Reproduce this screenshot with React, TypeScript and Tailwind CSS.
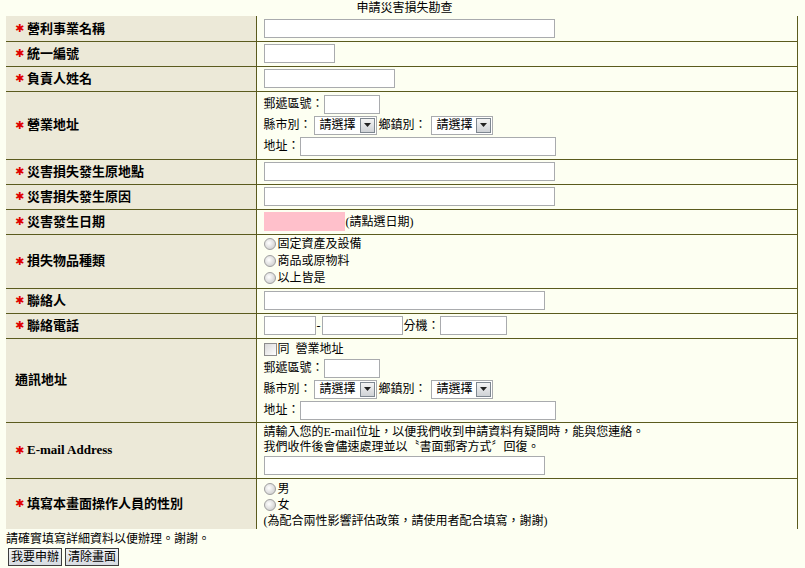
import React from "react";

const FONT = { fontFamily: '"Liberation Serif", "Noto Sans CJK TC", serif' };

function Star() {
  return (
    <span
      className="mr-[3px] inline-block w-[9px] text-[11px] font-bold leading-none text-[#e00000]"
      style={{ fontFamily: '"DejaVu Sans", sans-serif' }}
    >
      ✱
    </span>
  );
}

function Input({ w, pink }: { w: number; pink?: boolean }) {
  return (
    <span
      className={`inline-block h-[19px] align-middle border ${pink ? "bg-[#ffc0cb] border-[#ffc0cb]" : "bg-white border-[#a9abae]"}`}
      style={{ width: w }}
    />
  );
}

function Select({ w }: { w: number }) {
  return (
    <span
      className="inline-flex h-[19px] items-center justify-between border border-[#a9abae] bg-white align-middle"
      style={{ width: w }}
    >
      <span className="pl-[5px] text-[12px] leading-none">請選擇</span>
      <span className="mr-[1px] flex h-[15px] w-[15px] items-center justify-center border border-[#7e8790] bg-[linear-gradient(#f4f4f4,#cfd2d6)]">
        <svg width="7" height="4" viewBox="0 0 7 4">
          <polygon points="0,0 7,0 3.5,4" fill="#222" />
        </svg>
      </span>
    </span>
  );
}

function Radio({ label, h = 17 }: { label: string; h?: number }) {
  return (
    <div className="flex items-center" style={{ height: h }}>
      <span className="mr-[2px] inline-block h-[12px] w-[12px] rounded-full border border-[#a0a0a0] bg-[radial-gradient(circle_at_40%_40%,#ffffff,#c4c4c4)]" />
      <span>{label}</span>
    </div>
  );
}

function LabelCell({ children, star = true }: { children: React.ReactNode; star?: boolean }) {
  return (
    <td className="w-[250px] bg-[#ece9d8] pl-[9px] align-middle text-[13px] font-bold">
      <div className="flex items-center">
        {star && <Star />}
        <span>{children}</span>
      </div>
    </td>
  );
}

function Row({ h, label, star = true, children, last }: { h: number; label: React.ReactNode; star?: boolean; children: React.ReactNode; last?: boolean }) {
  return (
    <tr className={last ? "" : "border-b border-[#5b5b1e]"} style={{ height: h }}>
      <LabelCell star={star}>{label}</LabelCell>
      <td className="border-l border-r border-[#5b5b1e] pl-[7px] align-middle text-[12px]">{children}</td>
    </tr>
  );
}

function AddressBlock() {
  return (
    <>
      <div className="flex h-[21px] items-center">
        <span className="w-[60px]">郵遞區號：</span>
        <Input w={56} />
      </div>
      <div className="flex h-[21px] items-center">
        <span className="w-[50px]">縣市別：</span>
        <Select w={63} />
        <span className="ml-[2px] w-[52px]">鄉鎮別：</span>
        <Select w={62} />
      </div>
      <div className="flex h-[21px] items-center">
        <span className="w-[36px]">地址：</span>
        <Input w={256} />
      </div>
    </>
  );
}

export default function App() {
  return (
    <div className="min-h-[568px] w-[805px] bg-[#fdfff2] text-black" style={FONT}>
      <div className="flex h-[16px] items-center justify-center pl-[4px] text-[12px] leading-none">申請災害損失勘查</div>
      <table className="ml-[6px] w-[792px] table-fixed border-collapse">
        <tbody>
          <Row h={25} label="營利事業名稱">
            <Input w={291} />
          </Row>
          <Row h={25} label="統一編號">
            <Input w={71} />
          </Row>
          <Row h={25} label="負責人姓名">
            <Input w={131} />
          </Row>
          <Row h={68} label="營業地址">
            <AddressBlock />
          </Row>
          <Row h={25} label="災害損失發生原地點">
            <Input w={291} />
          </Row>
          <Row h={25} label="災害損失發生原因">
            <Input w={291} />
          </Row>
          <Row h={25} label="災害發生日期">
            <div className="flex items-center">
              <Input w={81} pink />
              <span className="ml-[1px]">(請點選日期)</span>
            </div>
          </Row>
          <Row h={54} label="損失物品種類">
            <Radio label="固定資產及設備" />
            <Radio label="商品或原物料" />
            <Radio label="以上皆是" />
          </Row>
          <Row h={25} label="聯絡人">
            <Input w={281} />
          </Row>
          <Row h={25} label="聯絡電話">
            <div className="flex items-center">
              <Input w={52} />
              <span className="mx-[1px]">-</span>
              <Input w={81} />
              <span className="ml-[1px]">分機：</span>
              <Input w={67} />
            </div>
          </Row>
          <Row h={84} label="通訊地址" star={false}>
            <div className="flex h-[18px] items-center pt-[1px]">
              <span className="mr-[1px] inline-block h-[13px] w-[13px] border border-[#8d8d8d] bg-[linear-gradient(135deg,#d9d9d9,#ffffff)]" />
              <span>同&nbsp;&nbsp;營業地址</span>
            </div>
            <AddressBlock />
          </Row>
          <Row h={56} label={<span className="text-[13px]">E-mail Address</span>}>
            <div className="pt-[1px] leading-[15px]">請輸入您的E-mail位址，以便我們收到申請資料有疑問時，能與您連絡。</div>
            <div className="leading-[15px]">我們收件後會儘速處理並以〝書面郵寄方式〞回復。</div>
            <div className="flex h-[21px] items-center">
              <Input w={281} />
            </div>
          </Row>
          <Row h={51} label="填寫本畫面操作人員的性別" last>
            <div className="pt-[2px]">
              <Radio label="男" h={16} />
              <Radio label="女" h={16} />
              <div className="leading-[16px]">(為配合兩性影響評估政策，請使用者配合填寫，謝謝)</div>
            </div>
          </Row>
        </tbody>
      </table>
      <div className="mt-[3px] pl-[6px] text-[12px] leading-[15px]">請確實填寫詳細資料以便辦理。謝謝。</div>
      <div className="mt-[1px] flex gap-[3px] pl-[8px]">
        <button className="h-[18px] w-[54px] border border-[#3d3d3d] bg-[linear-gradient(#f1f3f6,#d6dbe1)] text-[12px] leading-none">我要申辦</button>
        <button className="h-[18px] w-[54px] border border-[#3d3d3d] bg-[linear-gradient(#f1f3f6,#d6dbe1)] text-[12px] leading-none">清除畫面</button>
      </div>
    </div>
  );
}
